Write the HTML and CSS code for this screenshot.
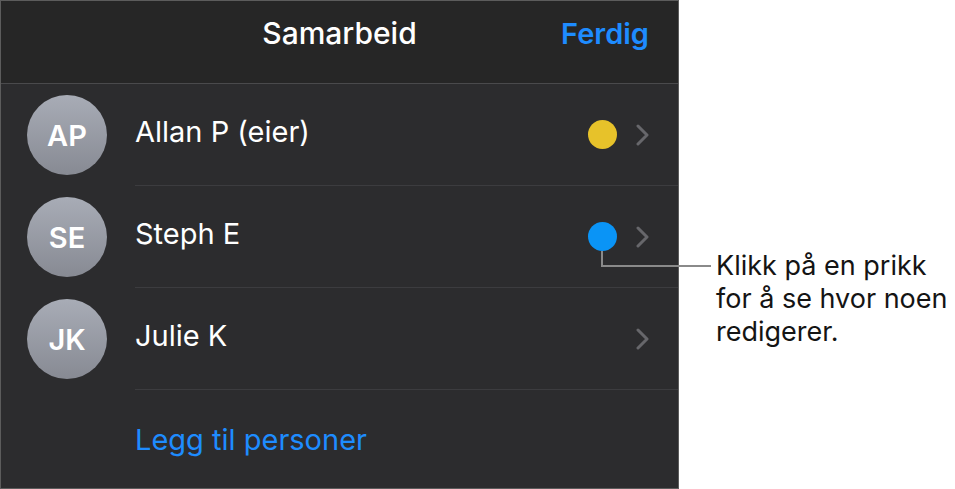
FILE: index.html
```html
<!DOCTYPE html>
<html lang="nb">
<head>
    <meta charset="UTF-8">
    <meta name="viewport" content="width=device-width, initial-scale=1.0">
    <title>Samarbeid</title>
    <link rel="stylesheet" href="styles.css">
</head>
<body>
    <div class="page">
        <div class="panel">
            <header class="nav">
                <span class="nav-title">Samarbeid</span>
                <span class="nav-done">Ferdig</span>
            </header>

            <ul class="people">
                <li class="person">
                    <div class="avatar">AP</div>
                    <div class="person-main">
                        <span class="name">Allan P (eier)</span>
                        <span class="dot dot-yellow"></span>
                        <svg class="chevron" width="13" height="22" viewBox="0 0 13 22"><polyline points="2,2 11,11 2,20" /></svg>
                    </div>
                </li>
                <li class="person">
                    <div class="avatar">SE</div>
                    <div class="person-main">
                        <span class="name">Steph E</span>
                        <span class="dot dot-blue callout"></span>
                        <svg class="chevron" width="13" height="22" viewBox="0 0 13 22"><polyline points="2,2 11,11 2,20" /></svg>
                    </div>
                </li>
                <li class="person">
                    <div class="avatar">JK</div>
                    <div class="person-main">
                        <span class="name">Julie K</span>
                        <svg class="chevron" width="13" height="22" viewBox="0 0 13 22"><polyline points="2,2 11,11 2,20" /></svg>
                    </div>
                </li>
            </ul>

            <div class="add">Legg til personer</div>
        </div>

        <!-- forklaring til prikken -->
        <p class="note">Klikk på en prikk<br>for å se hvor noen<br>redigerer.</p>
    </div>
</body>
</html>
```

FILE: styles.css
```css
body {
    margin: 0;
    background: #fff;
    font-family: Inter, "Noto Sans", sans-serif;
}
.page {
    display: flex;
    align-items: flex-start;
}
.panel {
    width: 679px;
    height: 489px;
    flex-shrink: 0;
    box-sizing: border-box;
    border: 1px solid #5c5c5c;
    background: #2c2c2e;
    display: flex;
    flex-direction: column;
}

/* topplinje */
.nav {
    height: 83px;
    box-sizing: border-box;
    padding: 15px 29px 0 0;
    background: #262626;
    border-bottom: 1px solid #4a4a4c;
    display: flex;
    justify-content: flex-end;
    position: relative;
    font-size: 29px;
    line-height: 35px;
}
.nav-title {
    position: absolute;
    left: 0;
    right: 0;
    text-align: center;
    color: #fff;
    font-weight: 500;
    font-size: 30px;
}
.nav-done {
    color: #1e8cff;
    font-weight: 600;
    position: relative;
}

.people {
    list-style: none;
    margin: 0;
    padding: 0;
}
.person {
    display: flex;
    height: 102px;
}
.avatar {
    width: 80px;
    height: 80px;
    margin: 11px 28px 0 26px;
    border-radius: 50%;
    background: linear-gradient(#a8acb6, #878a93);
    color: #fff;
    font-size: 29px;
    font-weight: 600;
    display: flex;
    align-items: center;
    justify-content: center;
    flex-shrink: 0;
}
.person-main {
    flex: 1;
    display: flex;
    align-items: center;
    padding-right: 29px;
    border-bottom: 1px solid #3c3c3f;
}
.name {
    flex: 1;
    color: #fff;
    font-size: 29px;
    padding-bottom: 6px;
}
.dot {
    width: 29px;
    height: 29px;
    border-radius: 50%;
    margin-right: 19px;
    position: relative;
}
.dot-yellow {
    background: #e7c22a;
}
.dot-blue {
    background: #0a94f6;
}
.callout::after {
    content: "";
    position: absolute;
    left: 13px;
    top: 29px;
    width: 108px;
    height: 14px;
    border-left: 2px solid #8a8a8a;
    border-bottom: 2px solid #8a8a8a;
}
.chevron polyline {
    fill: none;
    stroke: #67676b;
    stroke-width: 3;
    stroke-linecap: round;
    stroke-linejoin: round;
}

.add {
    flex: 1;
    display: flex;
    align-items: center;
    padding-left: 134px;
    color: #1e8cff;
    font-size: 29px;
}

.note {
    margin: 249px 0 0 37px;
    color: #141414;
    font-size: 27px;
    line-height: 33px;
    white-space: nowrap;
}
```
